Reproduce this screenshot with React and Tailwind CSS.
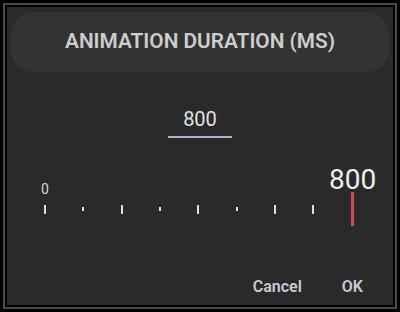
import React from "react";

const ticks = [
  { x: 44, tall: true },
  { x: 82, tall: false },
  { x: 121, tall: true },
  { x: 159, tall: false },
  { x: 197, tall: true },
  { x: 236, tall: false },
  { x: 274, tall: true },
  { x: 312, tall: true },
];

const App = () => {
  return (
    <div
      className="w-[400px] h-[312px] bg-black p-[3px]"
      style={{ fontFamily: "Roboto, 'Liberation Sans', sans-serif" }}
    >
      <div className="h-full border-2 border-[#4b4b4b] bg-black p-[2px]">
        <div className="h-full bg-[#2a2a2a] flex flex-col">
          {/* title */}
          <div className="mx-[4px] mt-[5px] h-[60px] rounded-[22px] bg-[#333333] flex items-center justify-center">
            <h1 className="text-[20.8px] font-semibold text-[#cdcdcd]">
              ANIMATION DURATION (MS)
            </h1>
          </div>

          {/* value input */}
          <div className="mt-[35px] flex flex-col items-center">
            <p className="text-[20px] leading-[25px] text-[#e2e2e2]">800</p>
            <div className="mt-[4px] w-[64px] h-[2px] bg-[#aeb0d4]" />
          </div>

          {/* slider scale */}
          <div className="relative mt-[27px] h-[65px]">
            <span className="absolute left-[34px] top-[17px] text-[14px] leading-[14px] text-[#d8d8d8]">
              0
            </span>
            <span className="absolute left-[322px] top-[1px] text-[28px] leading-[28px] text-[#eeeeee]">
              800
            </span>
            {ticks.map((t, i) => (
              <div
                key={i}
                className={`absolute w-[2px] bg-[#dcdcdc] ${t.tall ? "top-[40px] h-[9px]" : "top-[42px] h-[4px]"}`}
                style={{ left: t.x - 7 }}
              />
            ))}
            <div className="absolute left-[344px] top-[27px] w-[3px] h-[34px] bg-[#d24a52]" />
          </div>

          {/* buttons */}
          <div className="mt-[47px] flex justify-end items-center gap-[40px] pr-[30px]">
            <button className="text-[16px] leading-[20px] font-semibold text-[#c9cadb]">Cancel</button>
            <button className="text-[16px] leading-[20px] font-semibold text-[#c9cadb]">OK</button>
          </div>
        </div>
      </div>
    </div>
  );
};

export default App;
